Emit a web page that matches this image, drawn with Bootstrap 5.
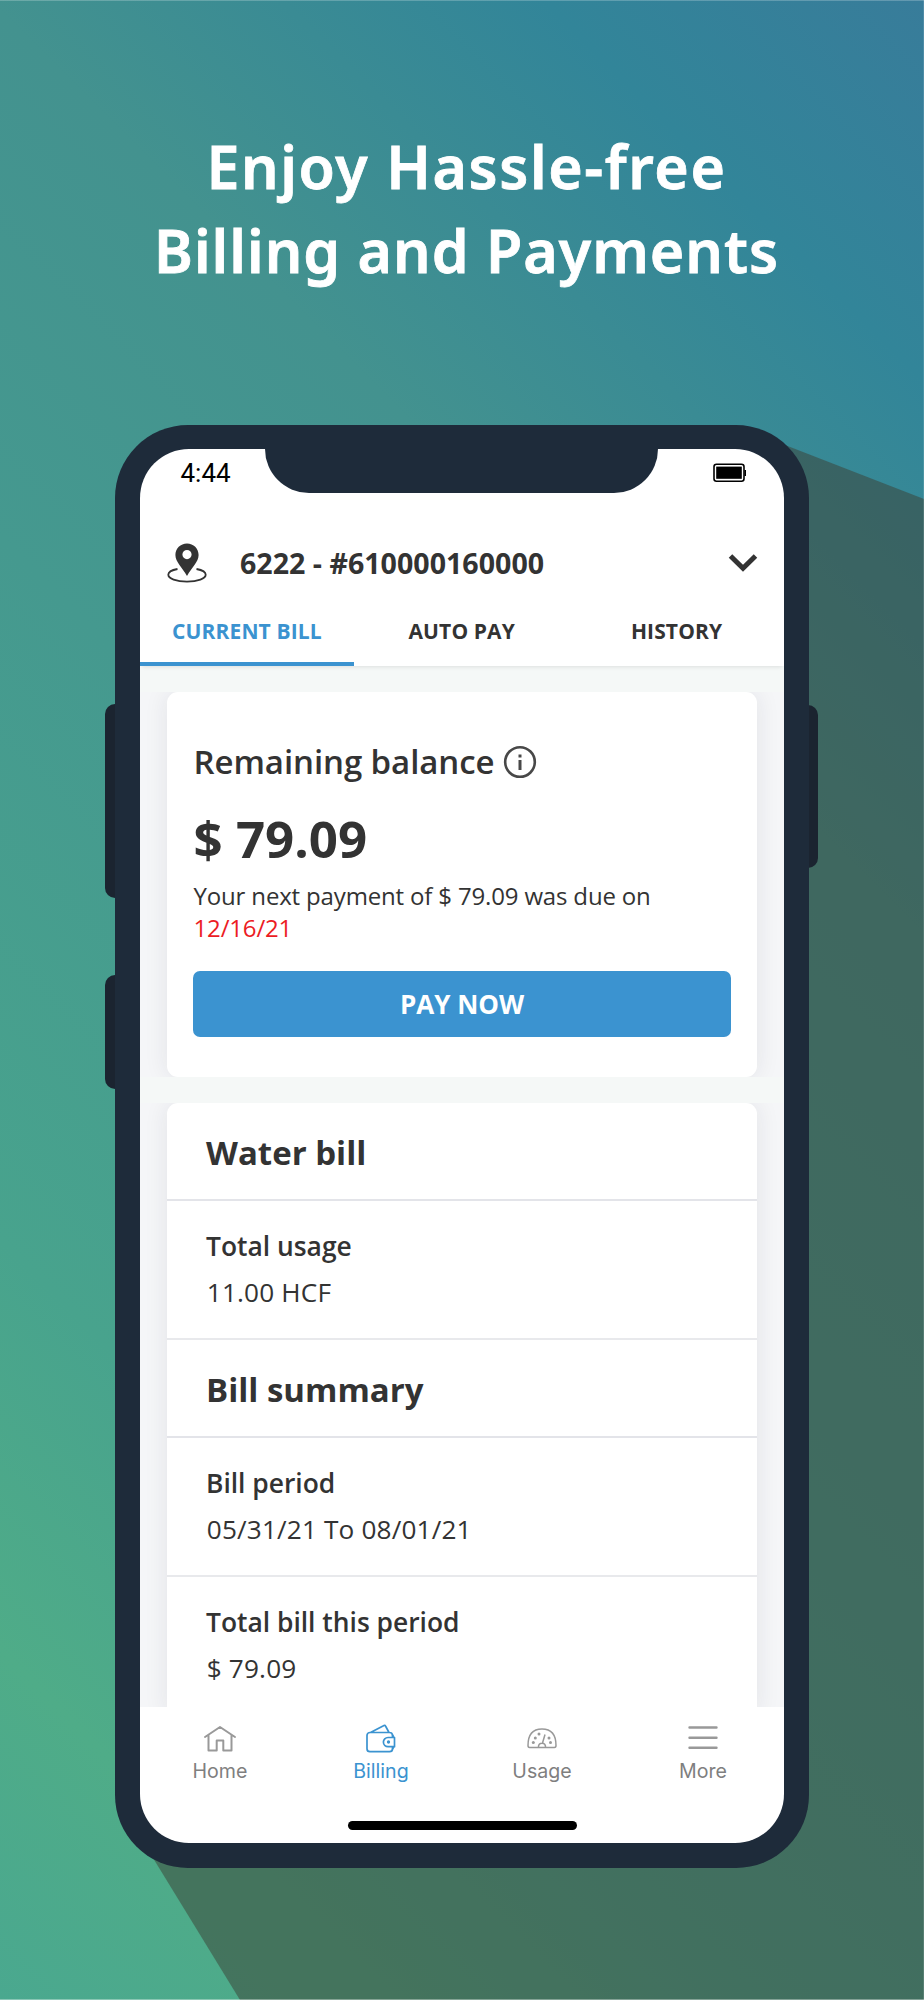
<!DOCTYPE html>
<html lang="en">
<head>
<meta charset="utf-8">
<meta name="viewport" content="width=device-width, initial-scale=1">
<title>Billing and Payments</title>
<link rel="stylesheet" href="https://cdn.jsdelivr.net/npm/bootstrap@5.3.0/dist/css/bootstrap.min.css">
<style>
body{width:924px;height:2000px;overflow:hidden;font-family:"Open Sans",sans-serif;color:#333;background:#4ba98e}
.stage{width:924px;height:2000px;padding-top:125px;background:linear-gradient(45deg,#4aa88f 0%,#4fac88 12%,#48a38d 26%,#45998f 50%,#43928f 68%,#3a8b94 78%,#328599 87%,#387c9a 100%)}
.stage::after{content:"";position:absolute;inset:0;box-shadow:inset -1px 0 rgba(255,255,255,.12),inset 0 1px rgba(255,255,255,.22),inset 0 -1px rgba(255,255,255,.35)}
.cast{left:0;top:0}
.headline{font:600 59px/83.5px "Noto Sans",sans-serif;color:#fff;-webkit-text-stroke:.8px #fff;height:299.5px;margin:0;padding-left:9px;text-align:center;white-space:nowrap}
.line-one{letter-spacing:1.6px}
.line-two{letter-spacing:1px}
.phone{width:693.5px;height:1443px;margin-left:115px;padding:24.5px;border-radius:73px;background:#1e2b3a;z-index:1}
.side-btn{width:20px;background:#1b2430;border-radius:10px}
.volume-up{left:105px;top:704px;height:194px}
.volume-down{left:105px;top:975px;height:114px}
.power{left:798px;top:705px;height:163px}
.screen{height:1394px;border-radius:49px;overflow:hidden;background:#fff}
.notch{left:125.5px;top:-1px;width:393px;height:45px;background:#1e2b3a;border-radius:0 0 44px 44px}
.status{height:48px;padding:0 38px 0 41px;color:#000;font-family:Roboto,sans-serif;font-size:26px}
.account{height:99px;padding:33px 26px 0 27px;font-size:28.6px;font-weight:700;white-space:nowrap}
.account-no{margin-left:33.5px}
.tabs{height:70px;font-size:21px;font-weight:700;letter-spacing:.12px;box-shadow:0 3px 4px -2px rgba(0,0,0,.1);z-index:1}
.tab-item{color:#333;text-decoration:none;white-space:nowrap;padding-top:2px}
.tab-item.active{color:#3b93d0;box-shadow:inset 0 -4px #3b93d0}
.feed{height:1041px;padding-top:26px;background:#f5f8f7;overflow:hidden}
.band{padding:0 27px 0 27px;background:#f5f6f8;overflow:hidden}
.band+.band{margin-top:26px}
.panel{background:#fff;border-radius:11px;box-shadow:0 0 24px rgba(30,30,50,.09)}
.balance{height:385px;padding:45px 26.5px 0 27px}
.t-head{font-size:33px;line-height:50px;font-weight:600;letter-spacing:-.08px;white-space:nowrap}
.t-head svg{margin-left:8.5px}
.t-amount{font-size:51px;line-height:64px;font-weight:700;margin-top:19px}
.t-note{font-size:24px;line-height:32px;margin-top:9.6px;letter-spacing:-.16px;white-space:nowrap}
.due{color:#ec1c24}
.pay{height:66px;width:538px;margin:27.4px 0 0 -.5px;background:#3b93d0;color:#fff;font-size:26px;font-weight:700;border:0;border-radius:7px}
.pay span{padding-top:2px}
.t-sec{height:96px;padding:3px 39px 0 39.5px;font-size:33px;font-weight:700}
.ln{border-bottom:2px solid #e3e4e9}
.ln1{border-bottom:2px solid #e8e9ec}
.row-item{height:137px;padding:24.5px 39px 0 39.5px;white-space:nowrap}
.row-item .k{font-size:26.4px;line-height:40px;font-weight:600}
.row-item .v{font-size:26.2px;line-height:40px;margin-top:6px;padding-left:.8px;letter-spacing:.15px}
.bottom{height:136px}
.nav-cell{width:161px;color:#7f7f7f;font:400 19.6px/26px Inter,sans-serif;text-decoration:none;padding-top:12px}
.nav-cell span{padding-top:1px}
.nav-cell.active{color:#3b93d0}
.home-bar{left:208px;bottom:13.5px;width:229.5px;height:8.5px;border-radius:5px;background:#000}
svg{display:block;flex:none}
</style>
</head>
<body>
<main class="stage position-relative">
  <svg class="cast position-absolute" width="924" height="2000"><path d="M785 445L924 499V2000H240L153 1858Z" fill="#3c4235" fill-opacity=".52"/></svg>
  <h1 class="headline position-relative"><span class="line-one">Enjoy Hassle-free</span><br><span class="line-two">Billing and Payments</span></h1>
  <div class="side-btn volume-up position-absolute"></div>
  <div class="side-btn volume-down position-absolute"></div>
  <div class="side-btn power position-absolute"></div>
  <section class="phone position-relative">
    <div class="screen position-relative d-flex flex-column">
      <div class="notch position-absolute"></div>
      <div class="status d-flex justify-content-between align-items-center">
        <span>4:44</span>
        <svg width="33" height="20"><rect x="1" y="1.2" width="30" height="17" rx="2.5" fill="#fff" stroke="#000" stroke-width="1.6"/><rect x="3.2" y="3.6" width="25.6" height="12.2" fill="#000"/><path d="M31.5 7h1.5v6h-1.5z"/></svg>
      </div>
      <div class="account d-flex align-items-center">
        <svg width="40" height="42" viewBox="0 0 40 42"><path fill="#333" fill-rule="evenodd" d="M20 1.500C13.500 1.500 8.400 6.500 8.400 13c0 7 6.600 12 11.600 21 5-9 11.600-14 11.600-21C31.600 6.500 26.500 1.500 20 1.500Zm0 6.500a4.600 4.600 0 1 1 0 9.200A4.600 4.600 0 0 1 20 8Z"/><path fill="none" stroke="#333" stroke-width="1.800" d="M10.500 27C5 28 1.300 30 1.300 32.800c0 3.800 8 6.800 18.700 6.800s18.700-3 18.700-6.800c0-2.800-3.700-4.800-9.200-5.800"/></svg>
        <span class="account-no">6222 - #610000160000</span>
        <svg class="ms-auto" width="30" height="20"><path d="M2.500 3L15 15.200 27.500 3" fill="none" stroke="#333" stroke-width="5"/></svg>
      </div>
      <nav class="tabs d-flex position-relative">
        <a class="tab-item active flex-fill w-25 d-flex align-items-center justify-content-center">CURRENT BILL</a>
        <a class="tab-item flex-fill w-25 d-flex align-items-center justify-content-center">AUTO PAY</a>
        <a class="tab-item flex-fill w-25 d-flex align-items-center justify-content-center">HISTORY</a>
      </nav>
      <div class="feed">
        <div class="band">
          <div class="panel balance">
            <div class="t-head d-flex align-items-center"><span>Remaining balance</span>
              <svg width="34" height="34"><circle cx="17" cy="17" r="14.800" fill="none" stroke="#484848" stroke-width="2.600"/><path d="M15.500 9.500h3v3h-3zM15.500 15h3v10h-3z" fill="#484848"/></svg></div>
            <div class="t-amount">$ 79.09</div>
            <div class="t-note">Your next payment of $ 79.09 was due on<br><span class="due">12/16/21</span></div>
            <button class="pay btn d-flex align-items-center justify-content-center p-0"><span>PAY NOW</span></button>
          </div>
        </div>
        <div class="band">
          <div class="panel rounded-bottom-0">
            <div class="t-sec d-flex align-items-center">Water bill</div>
            <div class="ln"></div>
            <div class="row-item"><div class="k">Total usage</div><div class="v">11.00 HCF</div></div>
            <div class="ln1"></div>
            <div class="t-sec d-flex align-items-center">Bill summary</div>
            <div class="ln"></div>
            <div class="row-item"><div class="k">Bill period</div><div class="v">05/31/21 To 08/01/21</div></div>
            <div class="ln1"></div>
            <div class="row-item"><div class="k">Total bill this period</div><div class="v">$ 79.09</div></div>
          </div>
        </div>
      </div>
      <nav class="bottom d-flex">
        <a class="nav-cell d-flex flex-column align-items-center"><svg width="38" height="38" viewBox="0 0 38 38" fill="none" stroke="#999" stroke-width="2"><path d="M4 18L19 8l15 10M7.500 16v15.500h8.200V21.500h6.600v10h8.200V16" stroke-linejoin="round" stroke-linecap="round"/></svg><span>Home</span></a>
        <a class="nav-cell active d-flex flex-column align-items-center"><svg width="38" height="38" viewBox="0 0 38 38" fill="none" stroke="#3b93d0" stroke-width="1.700" stroke-linejoin="round"><path d="M30.500 18v-1.500a3 3 0 0 0-3-3H8a3 3 0 0 0-3 3v13.200a3 3 0 0 0 3 3h19.500a3 3 0 0 0 3-3V27.500M8.500 13.500L22 6.500q1-.5 1.500.5L27 13.500"/><path d="M32.500 18.500H26a4.600 4.600 0 0 0 0 9.200h6.500zM30.500 16l1.500 2.500M30.500 30l1.500-2.500"/><circle cx="26.500" cy="23" r=".8" fill="#3b93d0"/></svg><span>Billing</span></a>
        <a class="nav-cell d-flex flex-column align-items-center"><svg width="38" height="38" viewBox="0 0 38 38" fill="none" stroke="#999" stroke-width="1.500" stroke-linejoin="round"><path d="M6.500 28.400Q5 28.400 5 26.500C5 17 9 10 19 10s14 7 14 16.500q0 1.900-1.500 1.900zM15.400 28.400c0-5.500 7.200-5.500 7.200 0M19.500 24l2.500-8.500"/><g fill="#999" stroke="none"><circle cx="10.300" cy="23.500" r="1.500"/><circle cx="12.300" cy="19" r="1.500"/><circle cx="16" cy="15" r="1.500"/><circle cx="26" cy="19" r="1.500"/><circle cx="27.500" cy="23.500" r="1.500"/></g></svg><span>Usage</span></a>
        <a class="nav-cell d-flex flex-column align-items-center"><svg width="38" height="38" viewBox="0 0 38 38" stroke="#999" stroke-width="2.400" stroke-linecap="round"><path d="M5.500 8.500h27M5.500 18.700h27M5.500 28.800h27"/></svg><span>More</span></a>
      </nav>
      <div class="home-bar position-absolute"></div>
    </div>
  </section>
</main>
<script src="https://cdn.jsdelivr.net/npm/bootstrap@5.3.0/dist/js/bootstrap.bundle.min.js"></script>
</body>
</html>
